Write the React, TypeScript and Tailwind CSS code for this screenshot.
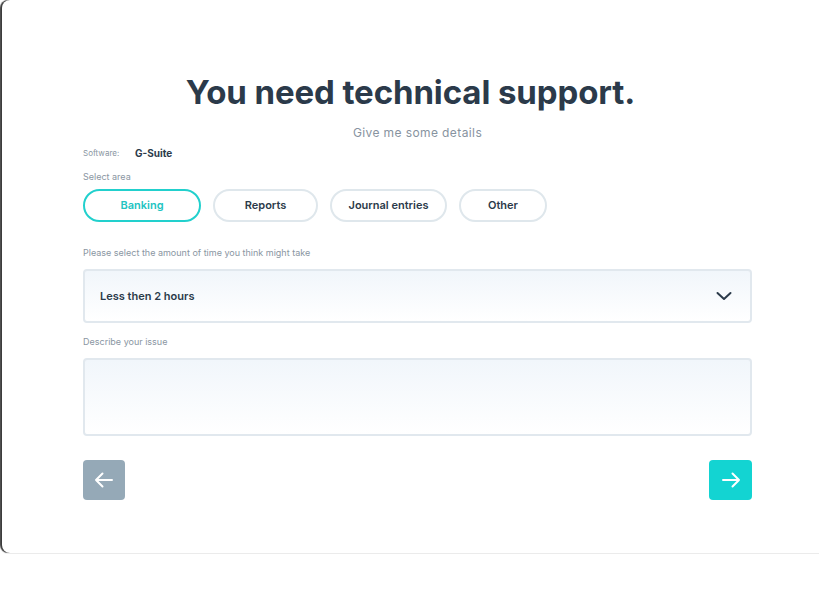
import React from "react";

const areas = ["Banking", "Reports", "Journal entries", "Other"];
const widths = ["w-[118px]", "w-[105px]", "w-[117px]", "w-[88px]"];

function App() {
  return (
    <div className="w-[819px] h-[599px] overflow-hidden bg-white" style={{ fontFamily: "Inter, 'Noto Sans', sans-serif" }}>
      <div className="ml-[2px] w-[831px] h-[553px] rounded-lg bg-white shadow-[-2px_0_1px_rgba(50,50,50,0.95)] px-[81px] pt-[72px]">
        <h1 className="pr-[14px] text-center text-[33px] leading-[40px] font-bold text-[#2b3a4a] tracking-[-0.1px]">
          You need technical support.
        </h1>
        <p className="mt-[13px] text-center text-[12px] leading-[16px] tracking-[0.4px] text-[#8793a0]">Give me some details</p>

        <div className="w-[669px]">
          <div className="mt-[6px] flex items-center text-[8px] leading-[12px]">
            <span className="text-[#8a96a2] w-[52px]">Software:</span>
            <span className="text-[10px] font-bold text-[#2b3a4a]">G-Suite</span>
          </div>

          <div className="mt-[12px] text-[9px] leading-[12px] text-[#8a96a2]">Select area</div>
          <div className="mt-[6px] flex gap-[12px]">
            {areas.map((a, i) => (
              <button
                key={a}
                className={
                  "h-[33px] rounded-full border-2 text-[11px] font-semibold " +
                  widths[i] +
                  (i === 0 ? " border-[#22d0cd] text-[#22c4c2]" : " border-[#dfe7ec] text-[#2b3a4a]")
                }
              >
                {a}
              </button>
            ))}
          </div>

          <div className="mt-[25px] text-[9px] leading-[12px] text-[#8a96a2]">
            Please select the amount of time you think might take
          </div>
          <div className="mt-[10px] h-[54px] rounded border-2 border-[#e1e8ee] bg-gradient-to-b from-[#f1f6fb] to-white flex items-center justify-between pl-[15px] pr-[18px]">
            <span className="text-[11px] font-semibold text-[#2b3a4a]">Less then 2 hours</span>
            <svg width="16" height="10" viewBox="0 0 16 10" fill="none">
              <path d="M1.5 2l6.5 6 6.5-6" stroke="#2b3a4a" strokeWidth="2" strokeLinecap="round" strokeLinejoin="round" />
            </svg>
          </div>

          <div className="mt-[13px] text-[9px] leading-[12px] text-[#8a96a2]">Describe your issue</div>
          <div className="mt-[10px] h-[78px] rounded border-2 border-[#e1e8ee] bg-gradient-to-b from-[#f1f6fb] to-white" />

          <div className="mt-[24px] flex justify-between">
            <button className="w-[42px] h-[40px] rounded bg-[#95a9b7] flex items-center justify-center">
              <svg width="20" height="16" viewBox="0 0 20 16" fill="none">
                <path d="M18 8H2M8.5 1.5L2 8l6.5 6.5" stroke="white" strokeWidth="2" strokeLinecap="round" strokeLinejoin="round" />
              </svg>
            </button>
            <button className="w-[43px] h-[40px] rounded bg-[#13d4d2] flex items-center justify-center">
              <svg width="20" height="16" viewBox="0 0 20 16" fill="none">
                <path d="M2 8h16M11.5 1.5L18 8l-6.5 6.5" stroke="white" strokeWidth="2" strokeLinecap="round" strokeLinejoin="round" />
              </svg>
            </button>
          </div>
        </div>
      </div>
    </div>
  );
}

export default App;
